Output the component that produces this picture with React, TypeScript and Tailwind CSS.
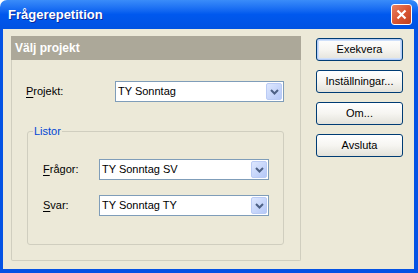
import type { ReactNode } from "react";

const Chevron = () => (
  <svg width="9" height="6" viewBox="0 0 9 6">
    <polyline
      points="1,1 4.5,4.5 8,1"
      fill="none"
      stroke="#4D6185"
      strokeWidth="2"
    />
  </svg>
);

const Combo = ({ value, width }: { value: string; width: string }) => (
  <div
    className={`${width} h-[21px] flex items-stretch border border-[#7F9DB9] bg-white`}
  >
    <span className="flex-1 pl-[2px] flex items-center text-black">{value}</span>
    <span className="my-[1px] mr-[1px] w-[16px] flex items-center justify-center rounded-[2px] border border-[#BACBF5] bg-gradient-to-br from-[#DDE7FE] to-[#B5C8F7]">
      <Chevron />
    </span>
  </div>
);

const Label = ({ hot, rest, width }: { hot: string; rest: string; width: string }) => (
  <span className={`${width} shrink-0 text-black`}>
    <u className="underline-offset-[2px]">{hot}</u>
    {rest}
  </span>
);

const XpButton = ({
  children,
  primary,
}: {
  children: ReactNode;
  primary?: boolean;
}) => (
  <button
    className={`w-[87px] h-[23px] rounded-[3px] border border-[#003C74] bg-gradient-to-b from-[#FFFFFF] via-[#F6F5F1] to-[#E3E2DA] text-black text-[11px] ${
      primary ? "shadow-[inset_0_0_0_1px_#B4CCF7,inset_0_0_0_2px_#CFE0FA]" : ""
    }`}
  >
    {children}
  </button>
);

export default function App() {
  //
  return (
    <div className="w-[418px] h-[273px] flex flex-col font-['Liberation_Sans',Arial,sans-serif] text-[11px]">
      {/* title bar */}
      <div className="h-[29px] shrink-0 rounded-t-[7px] bg-gradient-to-b from-[#3A8CF9] via-[#0058EE] to-[#0052E2] flex items-center justify-between pl-[8px] pr-[6px]">
        <span className="text-white font-bold text-[13px] [text-shadow:1px_1px_#0B2A9E]">
          Frågerepetition
        </span>
        <span className="w-[21px] h-[21px] rounded-[3px] border border-white bg-gradient-to-br from-[#E9805F] via-[#DA5634] to-[#C2401C] flex items-center justify-center">
          <svg width="11" height="11" viewBox="0 0 11 11">
            <path d="M1.5 1.5 L9.5 9.5 M9.5 1.5 L1.5 9.5" stroke="white" strokeWidth="2.2" />
          </svg>
        </span>
      </div>

      {/* body */}
      <div className="flex-1 flex items-start bg-[#ECE9D8] border-l-[3px] border-r-[4px] border-b-[4px] border-[#0553E4]">
        {/* left panel */}
        <div className="ml-[8px] mt-[7px] w-[290px] flex flex-col">
          <div className="h-[24px] bg-[#ACA899] flex items-center pl-[4px] text-white font-bold text-[12px]">
            Välj projekt
          </div>
          <div className="h-[201px] border-x border-b border-[#D0CEBF] rounded-b-[2px] pt-[21px]">
            <div className="flex items-center pl-[14px]">
              <Label hot="P" rest="rojekt:" width="w-[89px]" />
              <Combo value="TY Sonntag" width="w-[169px]" />
            </div>

            <fieldset className="mt-[23px] ml-[15px] w-[257px] h-[120px] border border-[#D0CEBF] rounded-[3px]">
              <legend className="ml-[5px] px-[1px] leading-[13px] text-[#0046D5]">
                Listor
              </legend>
              <div className="pt-[21px] pl-[15px] flex flex-col gap-[15px]">
                <div className="flex items-center">
                  <Label hot="F" rest="rågor:" width="w-[56px]" />
                  <Combo value="TY Sonntag SV" width="w-[170px]" />
                </div>
                <div className="flex items-center">
                  <Label hot="S" rest="var:" width="w-[56px]" />
                  <Combo value="TY Sonntag TY" width="w-[170px]" />
                </div>
              </div>
            </fieldset>
          </div>
        </div>

        {/* buttons */}
        <div className="ml-[15px] mt-[9px] flex flex-col gap-[9px]">
          <XpButton primary>Exekvera</XpButton>
          <XpButton>Inställningar...</XpButton>
          <XpButton>Om...</XpButton>
          <XpButton>Avsluta</XpButton>
        </div>
      </div>
    </div>
  );
}
